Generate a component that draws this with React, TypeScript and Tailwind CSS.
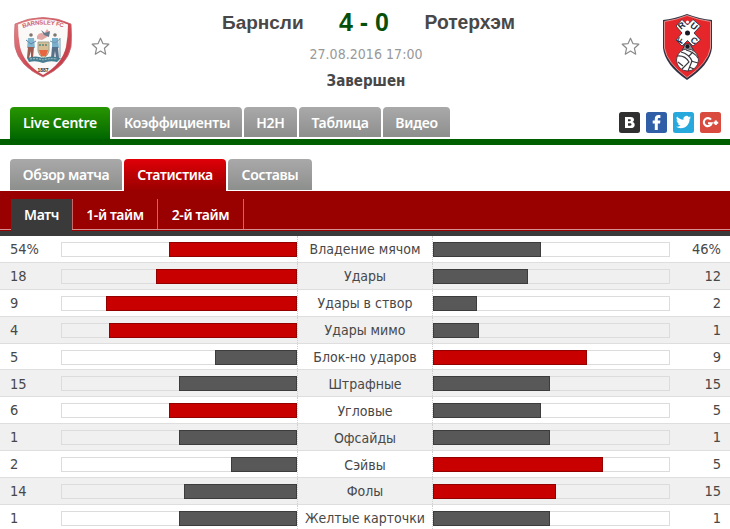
import React from 'react';

interface StatRow {
  label: string;
  home: string;
  away: string;
  homeWidth: number;
  awayWidth: number;
  leader: 'home' | 'away' | 'none';
}

const stats: StatRow[] = [
  { label: 'Владение мячом', home: '54%', away: '46%', homeWidth: 128, awayWidth: 109, leader: 'home' },
  { label: 'Удары', home: '18', away: '12', homeWidth: 141, awayWidth: 96, leader: 'home' },
  { label: 'Удары в створ', home: '9', away: '2', homeWidth: 191, awayWidth: 45, leader: 'home' },
  { label: 'Удары мимо', home: '4', away: '1', homeWidth: 188, awayWidth: 47, leader: 'home' },
  { label: 'Блок-но ударов', home: '5', away: '9', homeWidth: 82, awayWidth: 155, leader: 'away' },
  { label: 'Штрафные', home: '15', away: '15', homeWidth: 118, awayWidth: 118, leader: 'none' },
  { label: 'Угловые', home: '6', away: '5', homeWidth: 128, awayWidth: 109, leader: 'home' },
  { label: 'Офсайды', home: '1', away: '1', homeWidth: 118, awayWidth: 118, leader: 'none' },
  { label: 'Сэйвы', home: '2', away: '5', homeWidth: 66, awayWidth: 171, leader: 'away' },
  { label: 'Фолы', home: '14', away: '15', homeWidth: 113, awayWidth: 124, leader: 'away' },
  { label: 'Желтые карточки', home: '1', away: '1', homeWidth: 118, awayWidth: 118, leader: 'none' },
];

const mainTabs = [
  { label: 'Live Centre', size: 'w-[100px]', active: true },
  { label: 'Коэффициенты', size: 'w-[130px]', active: false },
  { label: 'H2H', size: 'w-[53px]', active: false },
  { label: 'Таблица', size: 'w-[82px]', active: false },
  { label: 'Видео', size: 'w-[67px]', active: false },
];

const subTabs = [
  { label: 'Обзор матча', size: 'w-[112px]', active: false },
  { label: 'Статистика', size: 'w-[102px]', active: true },
  { label: 'Составы', size: 'w-[84px]', active: false },
];

const Star = () => (
  <svg className="h-[19px] w-[19px]" viewBox="0 0 19 19" fill="#fff" stroke="#8a8a8a" strokeWidth="1.2" strokeLinejoin="round">
    <path d="M9.500 1.200 11.900 6.600 17.800 7.200 13.400 11.200 14.700 17.200 9.500 14.100 4.300 17.200 5.600 11.200 1.200 7.200 7.100 6.600Z" />
  </svg>
);

const HomeCrest = () => (
  <svg className="h-[62px] w-[60px]" viewBox="0 0 60 62">
    <defs>
      <linearGradient id="homeRim" x1="0" x2="1" y1="0" y2="1">
        <stop offset="0" stopColor="#e68b90" />
        <stop offset="0.5" stopColor="#cf4b55" />
        <stop offset="1" stopColor="#bd3c48" />
      </linearGradient>
      <path id="homeArc" d="M9 11Q29 4 51 11" />
    </defs>
    <path d="M1 7Q29-6 57 7Q58 20 57 30Q53 49 29 60Q5 49 1 30Q0 20 1 7Z" fill="url(#homeRim)" stroke="#c86870" strokeWidth="0.8" />
    <path d="M4 7.500Q29-3 54 7.500Q54 20 52 30Q48 47 29 58Q10 47 6 30Q4 20 4 7.500Z" fill="#fbf9f7" />
    <text className="font-['Liberation_Sans'] text-[6px] font-bold" fill="#d0606a">
      <textPath href="#homeArc" textLength="41">BARNSLEY FC</textPath>
    </text>
    <path d="M23 19Q26 14 30 17L33 12 36 16 33 20 28 23 23 22Z" fill="#e2a6a4" />
    <path d="M27 13 31 16 36 14 35 20 30 18Z" fill="#68798a" />
    <path d="M24 25H35V34Q34 39 29.500 41Q25 39 24 34Z" fill="#d8bd94" stroke="#9aa593" />
    <path d="M25 33H34L32 39H27Z" fill="#e8663f" />
    <path d="M25 28H34" stroke="#76947f" strokeWidth="2" strokeDasharray="2 1" />
    <circle cx="17" cy="18" r="1.800" fill="#7d766f" />
    <path d="M14 21H20L21 31H13Z" fill="#84b6d0" />
    <path d="M14 30H20L19 41H17V34L15 41H13Z" fill="#9d5c50" />
    <path d="M12 23 17 27 22 24" stroke="#5b86a3" fill="none" />
    <circle cx="41" cy="18" r="1.800" fill="#7d766f" />
    <path d="M38 21H44L45 31H38Z" fill="#79aecd" />
    <path d="M38 30H44L45 41H42L41 34 40 41H37Z" fill="#56708a" />
    <path d="M36 24 41 26 46 22M46 21V40" stroke="#7098ab" fill="none" />
    <path d="M13 41Q22 38 29 41Q38 38 47 41L43 45Q36 43 29 46Q22 43 15 45Z" fill="#477d91" />
    <path d="M16 42Q23 41 29 43Q35 41 43 42" stroke="#dbe4df" strokeWidth="0.7" fill="none" strokeDasharray="2 1" />
    <text x="29" y="55" textAnchor="middle" fill="#2e2828" className="font-['Liberation_Sans'] text-[5px] font-bold">1887</text>
  </svg>
);

const AwayCrest = () => (
  <svg className="h-[68px] w-[52px]" viewBox="0 0 52 68">
    <path d="M1 7Q12 6 25 1Q38 6 50 7V35Q48 52 25 67Q3 52 1 35Z" fill="#333344" />
    <path d="M2.500 8.500Q14 7 25 2.500Q37 7 48.500 8.500V35Q46 50 25 64.500Q5 50 2.500 35Z" fill="#e5262b" stroke="#f5a7a2" strokeWidth="0.8" />
    <g stroke="#2c2430" strokeWidth="0.8" fill="#fff">
      <path d="M20 6.500 25.500 12 31 6.500 38.500 13 32 20 38.500 27 31 33 25.500 27.500 20 33 14 27 20 20 14 13Z" />
      <path d="M20 38 23 31H28L32 38Z" fill="#8f8f93" />
      <circle cx="25.500" cy="47" r="11" />
    </g>
    <g fill="#171a25">
      <circle cx="25.500" cy="20" r="2.500" />
      <circle cx="25.500" cy="33.500" r="2" />
    </g>
    <circle cx="25.500" cy="9" r="1.500" fill="#fff" />
    <g className="font-['Liberation_Sans'] text-[9px] font-bold" fill="#202b42" textAnchor="middle">
      <text transform="translate(21.500 15) rotate(-40)">R</text>
      <text transform="translate(30 15.500) rotate(40)">U</text>
      <text transform="translate(21 29) rotate(-60)">F</text>
      <text transform="translate(30.500 30) rotate(35)">C</text>
    </g>
    <g fill="none" stroke="#3a383e" strokeWidth="1.200">
      <path d="M15 43Q23 42 27 49L20 56M19 39Q27 41 30 48L26 58M24 37Q32 39 36 45M31 39 27 43M29 48 36 50M27 54 32 56M16 49 21 53" />
    </g>
  </svg>
);

const SocialIcons = () => (
  <div className="flex gap-[6px]">
    <svg className="h-[21px] w-[21px]" viewBox="0 0 21 21">
      <rect width="21" height="21" rx="2.500" fill="#303030" />
      <path fillRule="evenodd" d="M6 5H11.500C14 5 15 6.200 15 7.700 15 9 14.300 9.700 13.300 10 14.800 10.300 15.700 11.400 15.700 12.900 15.700 15 14.200 16 11.700 16H6ZM9 7.300V9.200H10.600C12.400 9.200 12.300 7.300 10.700 7.300ZM9 11.300V13.700H11C13 13.700 13 11.300 11 11.300Z" fill="#fff" />
    </svg>
    <svg className="h-[21px] w-[21px]" viewBox="0 0 21 21">
      <rect width="21" height="21" rx="2.500" fill="#305fa7" />
      <path d="M8.800 18V11.500H6.700V8.600H8.800V6.900C8.800 4.400 10.200 3.100 12.300 3.100H14.400V5.900H13C12 5.900 11.800 6.400 11.800 7.200V8.600H14.400L14 11.500H11.800V18Z" fill="#fff" />
    </svg>
    <svg className="h-[21px] w-[21px]" viewBox="0 0 21 21">
      <rect width="21" height="21" rx="2.500" fill="#28a9dd" />
      <path transform="translate(3 2.500) scale(.63)" d="M23.950 4.570a10 10 0 0 1-2.820.770 4.960 4.960 0 0 0 2.160-2.720c-.95.550-2 .95-3.130 1.180a4.920 4.920 0 0 0-8.380 4.480C7.690 8.090 4.070 6.130 1.640 3.160a4.920 4.920 0 0 0 1.520 6.570 4.900 4.900 0 0 1-2.230-.61v.06c0 2.380 1.700 4.370 3.950 4.830a5 5 0 0 1-2.210.08 4.940 4.940 0 0 0 4.600 3.420A9.870 9.870 0 0 1 0 19.540 13.990 13.990 0 0 0 7.550 21.750c9.140 0 14.300-7.720 14-14.640a10 10 0 0 0 2.400-2.540Z" fill="#fff" />
    </svg>
    <svg className="h-[21px] w-[21px]" viewBox="0 0 21 21">
      <rect width="21" height="21" rx="2.500" fill="#d84b3e" />
      <path d="M11 7.700A4 4 0 1 0 11.700 11.200H8M15.800 8.500V13M13.500 10.800H18.200" fill="none" stroke="#fff" strokeWidth="2.100" />
    </svg>
  </div>
);

interface BarProps {
  width: number;
  side: 'home' | 'away';
  leading: boolean;
}

const Bar: React.FC<BarProps> = ({ width, side, leading }) => (
  <div className={`flex h-[15px] shrink-0 border border-[#dcdcdc] ${side === 'home' ? 'w-[236px] justify-end' : 'w-[237px]'}`}>
    <div
      className={`-my-px h-[15px] border ${side === 'home' ? '-mr-px' : '-ml-px'} ${
        leading ? 'border-[#930000] bg-[#c80000]' : 'border-[#3c3c3c] bg-[#585858]'
      }`}
      style={{ width }}
    />
  </div>
);

const App: React.FC = () => (
  <div className="h-[529px] w-[730px] overflow-hidden bg-white font-['DejaVu_Sans_Condensed','DejaVu_Sans',sans-serif] text-[#484848]">
    <header className="flex h-[107px]">
      <div className="flex w-[222px] shrink-0 pt-[17px] pl-[14px]">
        <HomeCrest />
        <div className="mt-[20px] ml-[17px]"><Star /></div>
      </div>
      <div className="flex w-[293px] shrink-0 flex-col">
        <div className="flex h-[46px] items-center font-['Liberation_Sans',sans-serif] font-bold whitespace-nowrap">
          <span className="w-[100px] text-[19px]">Барнсли</span>
          <span className="w-[84px] text-center text-[25px] text-[#064f06]">4 - 0</span>
          <span className="w-[109px] text-right text-[19.3px]">Ротерхэм</span>
        </div>
        <div className="h-[28px] w-[288px] pt-px text-center text-[14px] leading-[14px] tracking-[0.05px] text-[#999]">27.08.2016 17:00</div>
        <div className="w-[288px] text-center text-[15px] leading-[15px] font-bold">Завершен</div>
      </div>
      <div className="ml-[106px] flex shrink-0 pt-[13px]">
        <div className="mt-[24px]"><Star /></div>
        <div className="ml-[22px]"><AwayCrest /></div>
      </div>
    </header>

    <nav className="flex h-[38px] items-start justify-between border-b-[6px] border-[#006000] pr-[9px] pl-[10px] font-['Noto_Sans',sans-serif]">
      <div className="flex gap-[2px]">
        {mainTabs.map((tab) => (
          <button
            key={tab.label}
            className={`${tab.size} rounded-t-[4px] text-center text-[14px] font-semibold tracking-[-0.25px] whitespace-nowrap text-white ${
              tab.active ? 'h-[32px] bg-linear-to-b from-[#279600] to-[#006700] pb-[2px]' : 'h-[30px] bg-linear-to-b from-[#a9a9a9] to-[#8d8f8d]'
            }`}
          >
            {tab.label}
          </button>
        ))}
      </div>
      <div className="mt-[5px]"><SocialIcons /></div>
    </nav>

    <nav className="mt-[14px] flex h-[32px] gap-[2px] pl-[10px] font-['Noto_Sans',sans-serif]">
      {subTabs.map((tab) => (
        <button
          key={tab.label}
          className={`${tab.size} rounded-t-[4px] text-center text-[14px] font-semibold tracking-[-0.35px] whitespace-nowrap text-white ${
            tab.active ? 'h-[32px] bg-linear-to-b from-[#e00008] to-[#990000] pb-px' : 'h-[31px] bg-linear-to-b from-[#a9a9a9] to-[#8d8f8d]'
          }`}
        >
          {tab.label}
        </button>
      ))}
    </nav>

    <nav className="flex h-[45px] items-start border-b-[5px] border-[#3a3a3a] bg-[#990000] pl-[11px] font-['Noto_Sans',sans-serif] text-[14px] font-semibold tracking-[-0.4px] text-white">
      <div className="-ml-[11px] flex h-[39px] w-[730px] items-end border-b border-[#d58f8f] pl-[11px]">
        <div className="-mb-[2px] flex h-[32px] w-[61px] items-center justify-center bg-[#3a3a3a] pb-[2px]">Матч</div>
        <div className="flex h-[30px] w-[86px] items-center justify-center border-r border-l border-[#c86868]">1-й тайм</div>
        <div className="flex h-[30px] w-[86px] items-center justify-center border-r border-[#c86868]">2-й тайм</div>
      </div>
    </nav>

    <main>
      {stats.map((row, index) => (
        <div key={row.label} className={`flex h-[26.9px] items-center border-b border-[#dedede] text-[14px] ${index % 2 ? 'bg-[#f0f0f0]' : 'bg-white'}`}>
          <span className="w-[61px] pt-[2px] pl-[10px] text-[14.5px]">{row.home}</span>
          <div className="pt-px"><Bar width={row.homeWidth} side="home" leading={row.leader === 'home'} /></div>
          <span className="flex h-full w-[136px] shrink-0 items-center justify-center border-r border-l border-dotted border-[#d0d0d0] pt-[2px] whitespace-nowrap">{row.label}</span>
          <div className="pt-px"><Bar width={row.awayWidth - 1} side="away" leading={row.leader === 'away'} /></div>
          <span className="w-[60px] pt-[2px] pr-[9px] text-right text-[14.5px]">{row.away}</span>
        </div>
      ))}
    </main>
  </div>
);

export default App;
